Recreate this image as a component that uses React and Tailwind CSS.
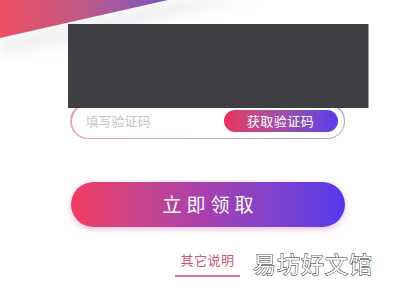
export default function App() {
  const cjk = { fontFamily: '"Noto Sans CJK SC", "Noto Sans", sans-serif' };
  return (
    <div className="relative w-[400px] h-[300px] overflow-hidden bg-white" style={cjk}>
      <svg className="absolute left-0 top-0" width="400" height="60" viewBox="0 0 400 60">
        <defs>
          <linearGradient id="band" x1="0" y1="0" x2="1" y2="0">
            <stop offset="0" stopColor="#ec4f60" />
            <stop offset="0.5" stopColor="#c05a88" />
            <stop offset="1" stopColor="#7656c6" />
          </linearGradient>
          <filter id="blur" x="-20%" y="-50%" width="140%" height="200%">
            <feGaussianBlur stdDeviation="6" />
          </filter>
        </defs>
        <polygon points="0,36 175,-2 255,-2 40,50 0,56" fill="#d6d6da" opacity="0.3" filter="url(#blur)" />
        <polygon points="0,0 168,0 0,38" fill="url(#band)" />
      </svg>

      <div className="relative flex flex-col pt-[24px]">
        <div className="relative z-10 ml-[68px] w-[301px] h-[84px] bg-[#3f3e42] border-r border-[#a0a0a4]" />

        <div className="ml-[70px] -mt-[5px] w-[275px] h-[36px] rounded-full p-[1.5px] bg-gradient-to-r from-[#e3a6b6] to-[#a9a4c4]">
          <div className="flex h-full items-center justify-between rounded-full bg-white pl-[14px] pr-[6px]">
            <span className="text-[13px] text-[#c6c6ca]">填写验证码</span>
            <div className="flex h-[22px] w-[114px] items-center justify-center rounded-full bg-gradient-to-r from-[#e93058] to-[#5b37ea] text-[13px] text-white tracking-[0.5px]">
              获取验证码
            </div>
          </div>
        </div>

        <div className="ml-[71px] mt-[43px] flex h-[45px] w-[274px] items-center justify-center rounded-full bg-gradient-to-r from-[#f03b5f] via-[#a63fb0] to-[#5437ec] shadow-[0_2px_6px_rgba(190,60,160,0.35)]">
          <span className="text-[19px] tracking-[5px] text-white pl-[5px]">立即领取</span>
        </div>

        <div className="mt-[25px] flex items-start">
          <div className="ml-[175px] flex w-[65px] flex-col items-center">
            <span className="text-[13px] leading-[15px] tracking-[0.5px] text-[#c45a72]">其它说明</span>
            <div className="mt-[8px] h-[2px] w-[65px] bg-[#d5798a]" />
          </div>
          <span
            className="ml-[13px] -mt-[1px] text-[23px] leading-[25px] text-white tracking-[1px]"
            style={{ WebkitTextStroke: "1px #2a2a2a", paintOrder: "stroke fill" }}
          >
            易坊好文馆
          </span>
        </div>
      </div>
    </div>
  );
}
